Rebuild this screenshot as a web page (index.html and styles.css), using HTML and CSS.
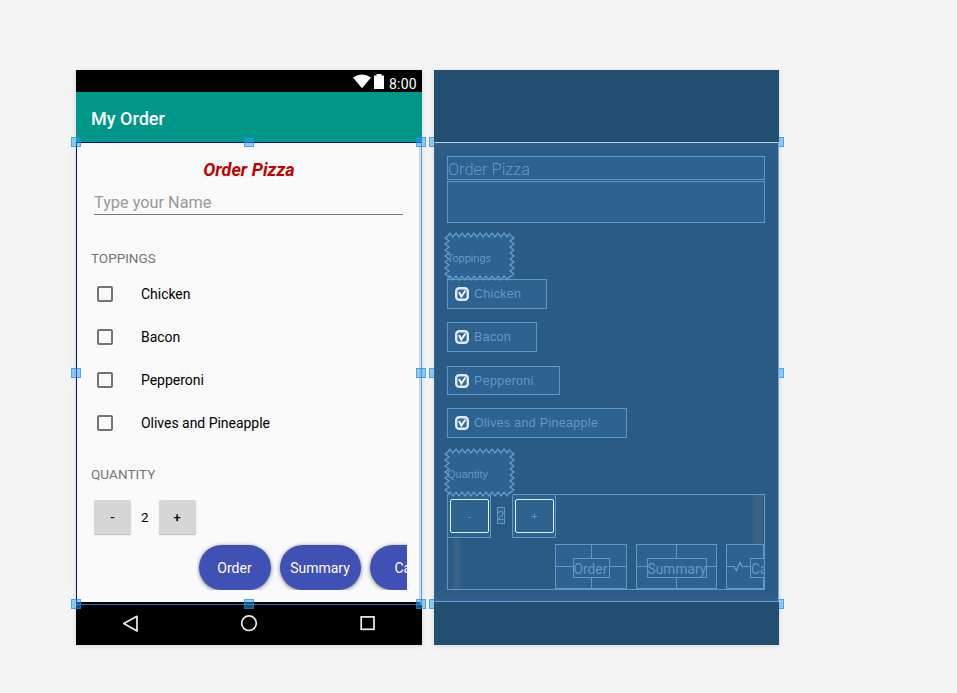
FILE: index.html
```html
<!DOCTYPE html>
<html lang="en">
<head>
<meta charset="utf-8">
<title>My Order</title>
<link rel="stylesheet" href="styles.css">
</head>
<body>
<main class="canvas">
  <section class="device preview">
    <header class="status">
      <svg class="wifi" width="18" height="15" viewBox="0 0 18 15"><path d="M0 3.6Q9-2.8 18 3.6L9 14.3Z" fill="#fff"/></svg>
      <svg class="battery" width="10" height="15" viewBox="0 0 10 15"><path d="M0 1.5h2.5V0h5v1.5H10V15H0Z" fill="#fff"/></svg>
      <span class="clock">8:00</span>
    </header>
    <div class="appbar"><span>My Order</span></div>
    <div class="screen">
      <h1 class="heading"><span>Order Pizza</span></h1>
      <div class="field"><span>Type your Name</span></div>
      <h2 class="section toppings"><span>TOPPINGS</span></h2>
      <div class="checks">
        <label class="check"><i class="box"></i><span>Chicken</span></label>
        <label class="check"><i class="box"></i><span>Bacon</span></label>
        <label class="check"><i class="box"></i><span>Pepperoni</span></label>
        <label class="check"><i class="box"></i><span>Olives and Pineapple</span></label>
      </div>
      <h2 class="section quantity"><span>QUANTITY</span></h2>
      <div class="stepper"><button class="step">-</button><span class="count">2</span><button class="step">+</button></div>
      <div class="actions">
        <button class="pill order">Order</button>
        <button class="pill summary">Summary</button>
        <button class="pill cancel">Ca</button>
      </div>
    </div>
    <nav class="nav">
      <svg width="346" height="43" viewBox="0 0 346 43" fill="none" stroke="#eee" stroke-width="1.7"><path d="M61 14.3V29L47.8 21.6Z" stroke-linejoin="round"/><circle cx="173" cy="21.2" r="7.3"/><rect x="285.2" y="14.9" width="12.8" height="12.4"/></svg>
    </nav>
    <div class="outline"></div>
    <i class="handle top left"></i><i class="handle top mid"></i><i class="handle top right"></i>
    <i class="handle middle left"></i><i class="handle middle right"></i>
    <i class="handle bottom left"></i><i class="handle bottom mid"></i><i class="handle bottom right"></i>
  </section>

  <section class="device blueprint">
    <div class="bp-top"></div>
    <div class="bp-screen">
      <div class="bp-title"><span>Order Pizza</span></div>
      <div class="bp-input"></div>
      <div class="bp-label"><svg class="zig" width="70" height="48"></svg><span>Toppings</span></div>
      <div class="bp-check chicken"><svg class="tick" width="14" height="14" viewBox="0 0 14 14"><use href="#tick"/></svg><span>Chicken</span></div>
      <div class="bp-check bacon"><svg class="tick" width="14" height="14" viewBox="0 0 14 14"><use href="#tick"/></svg><span>Bacon</span></div>
      <div class="bp-check pepperoni"><svg class="tick" width="14" height="14" viewBox="0 0 14 14"><use href="#tick"/></svg><span>Pepperoni</span></div>
      <div class="bp-check olives"><svg class="tick" width="14" height="14" viewBox="0 0 14 14"><use href="#tick"/></svg><span>Olives and Pineapple</span></div>
      <div class="bp-label"><svg class="zig" width="70" height="48"></svg><span>Quantity</span></div>
      <div class="bp-group">
        <div class="bp-stepper">
          <div class="bp-btn"><b>-</b></div><div class="bp-count"><span>2</span></div><div class="bp-btn"><b>+</b></div>
        </div>
        <div class="bp-actions">
          <div class="bp-pill bp-order"><span>Order</span></div>
          <div class="bp-pill bp-summary"><span>Summary</span></div>
          <div class="bp-pill bp-cancel">
            <svg class="spring" width="23" height="16" viewBox="0 0 23 16" fill="none" stroke="#6aa1d2" stroke-width="1.2"><path d="M0 7.5H7L9.5 11.5L13 3.5L15 7.5H23"/></svg>
            <span>Ca</span>
          </div>
        </div>
      </div>
    </div>
    <div class="bp-bottom"></div>
    <i class="handle half top left"></i><i class="handle half top right"></i>
    <i class="handle half middle left"></i><i class="handle half middle right"></i>
    <i class="handle half bottom left"></i><i class="handle half bottom right"></i>
  </section>
</main>
<svg class="defs" width="0" height="0"><defs><g id="tick"><rect x="1.2" y="1.2" width="11.6" height="11.6" rx="3" fill="#35699a" stroke="#dfeaff" stroke-width="2.4"/><path d="M4 5L6.3 9.5L10.5 3.5" fill="none" stroke="#f0f5ff" stroke-width="2"/></g></defs></svg>
<script src="zigzag.js"></script>
</body>
</html>
```
FILE: styles.css
```css
* { box-sizing: border-box; }
body { margin: 0; background: #f4f4f4; font-family: Roboto, sans-serif; overflow: hidden; }
h1, h2 { margin: 0; font-weight: 400; }
button { border: 0; padding: 0; font-family: inherit; }
.defs { position: absolute; }
.canvas { display: flex; gap: 12px; padding: 70px 0 48px 76px; height: 693px; }
.device { position: relative; height: 575px; box-shadow: 0 1px 5px rgba(0, 0, 0, .12); display: flex; flex-direction: column; }
.preview { width: 346px; }
.blueprint { width: 345px; }

.status { height: 22px; background: #000; color: #fff; display: flex; justify-content: flex-end; padding: 4px 5px 0 0; }
.battery { margin-left: 3px; }
.clock { font-size: 14px; line-height: 20px; margin-left: 5px; width: 28px; white-space: nowrap; letter-spacing: .2px; }
.appbar { height: 50px; background: #009788; color: #fff; padding-left: 15px; font-size: 18px; font-weight: 500; line-height: 53px; }
.screen { height: 460px; background: #fafafa; padding: 14px 15px 0; overflow: hidden; }
.heading { height: 28px; text-align: center; color: #c00000; font-size: 18px; line-height: 28px; font-weight: 700; font-style: italic; }
.field { height: 31px; margin: 0 4px 0 3px; border-bottom: 1px solid #777; color: #999; font-size: 16.3px; line-height: 37px; }
.section { font-size: 13.5px; color: #757575; line-height: 20px; height: 20px; }
.toppings { margin-top: 34px; line-height: 19px; }
.checks { margin-top: 3px; }
.check { display: flex; align-items: center; height: 43px; font-size: 14px; letter-spacing: -.03px; color: #000; }
.box { width: 16px; height: 16px; border: 2px solid #737373; border-radius: 2px; margin: 0 28px 0 6px; }
.quantity { margin-top: 20px; letter-spacing: .06px; }
.stepper { display: flex; align-items: center; margin: 16px 0 0 3px; height: 34px; font-size: 14px; }
.step { width: 37px; height: 34px; background: #d6d6d6; border-radius: 2px; box-shadow: 0 1px 1px #bbb; font-size: 13px; font-weight: 500; color: #000; }
.count { width: 27.5px; text-align: center; font-size: 13.5px; }
.actions { display: flex; gap: 9px; height: 49px; padding: 4px 0 0 1.5px; margin: 7px 0 0 106px; overflow: hidden; }
.pill { flex: none; height: 45px; border-radius: 23px; background: #3f51b5; color: #fff; font-size: 14px; line-height: 47px; box-shadow: 0 1px 4px rgba(0, 0, 0, .5); }
.order { width: 72px; }
.summary { width: 81px; }
.cancel { width: 75px; text-align: left; padding-left: 25px; }
.nav { height: 43px; background: #000; }
.nav svg { display: block; }

.outline { position: absolute; left: 0; top: 72px; width: 346px; height: 463px; border: 1px solid #0808a8; border-right-color: #5a9fdf; border-bottom-color: #1773b5; box-shadow: inset -3px 0 0 -1px rgba(170, 185, 210, .55); }
.handle { position: absolute; width: 10px; height: 10px; background: rgba(46, 160, 247, .5); border: 1px solid rgba(20, 133, 215, .55); }
.top { top: 67px; }
.middle { top: 298px; }
.bottom { top: 529px; }
.left { left: -5px; }
.mid { left: 168px; }
.right { right: -4px; }
.half { width: 5px; }
.half.left { border-right: 0; }
.half.right { right: -5px; border-left: 0; }

.blueprint { color: #6299c9; }
.bp-top { height: 72px; background: #224e70; }
.bp-screen { height: 460px; background: linear-gradient(#305f88, #2a5b84 18px, #2a5b84 445px, #305f88); border: 1px solid #a9c5e0; border-top-color: #b9d0e6; border-bottom-color: #6aa0d3; border-left-color: #3b6690; border-right-color: #6ea8de; padding: 13px 13px 0 12px; }
.bp-bottom { height: 43px; background: #224e70; }
.bp-title, .bp-input, .bp-check, .bp-btn, .bp-pill, .bp-count { background: #2e628f; border: 1px solid #5f99ca; }
.bp-title { height: 24px; font-size: 16.4px; font-weight: 300; line-height: 25px; }
.bp-input { height: 42px; margin-top: 1px; }
.bp-label { position: relative; width: 66px; height: 44px; margin-top: 12px; background: #2e628f; font: 11px/46px "Liberation Sans", sans-serif; }
.bp-label span { position: relative; }
.zig { position: absolute; left: -2px; top: -2px; overflow: visible; }
.bp-check { display: flex; align-items: center; height: 30px; padding-left: 7px; font: 12.5px "Liberation Sans", sans-serif; letter-spacing: .3px; white-space: nowrap; }
.tick { margin-right: 5px; }
.chicken { width: 100px; }
.bacon { width: 90px; margin-top: 13px; }
.pepperoni { width: 113px; margin-top: 14px; height: 29px; }
.olives { width: 180px; margin-top: 13px; }
.olives + .bp-label { margin-top: 13px; }
.bp-group { height: 96px; margin-top: -1px; border: 1px solid #5f99ca; background: linear-gradient(90deg, transparent 4px, #3a6388 7px, #3a6388 10px, transparent 15px) 0 44px / 16px 50px no-repeat, linear-gradient(90deg, transparent, #3a6388 7px, #3a6388 11px, transparent) 302px 0 / 14px 49px no-repeat; }
.bp-stepper { display: flex; height: 49px; margin: -1px 0 0 -1px; }
.bp-btn { width: 44px; height: 44px; padding: 4px 2px; }
.bp-btn + .bp-count + .bp-btn { margin-left: 0; }
.bp-btn b { display: block; width: 39px; height: 34px; border: 1.5px solid #e3f0ff; border-radius: 2px; text-align: center; font: 11px/33px "Liberation Sans", sans-serif; }
.bp-count { width: 8px; height: 17px; margin: 13px 7px 0 6px; font: 13px/16px "Liberation Sans", sans-serif; }
.bp-count span { margin-left: -1px; }
.bp-actions { display: flex; gap: 9px; margin: 1px 0 0 107px; overflow: hidden; }
.bp-pill { flex: none; height: 45px; display: flex; align-items: center; justify-content: center; font-size: 13.8px; background: linear-gradient(#5f99ca, #5f99ca) center / 1px 100% no-repeat, linear-gradient(#5f99ca, #5f99ca) center / 100% 1px no-repeat, #2e628f; }
.bp-pill span { border: 1px solid #5f99ca; background: #2e628f; height: 20px; line-height: 21px; margin-top: 2px; white-space: nowrap; }
.bp-order { width: 72px; }
.bp-order span { width: 37px; }
.bp-summary { width: 81px; }
.bp-summary span { width: 60px; }
.bp-cancel { width: 76px; justify-content: flex-start; background: linear-gradient(#5f99ca, #5f99ca) 36px 0 / 1px 100% no-repeat, #2e628f; }
.bp-cancel span { width: 30px; }
.spring { flex: none; }
```
FILE: zigzag.js
```js
// Serrated outline around the section labels.
document.querySelectorAll('.zig').forEach(function (svg) {
  var x, y, i, top = '', bottom = '', left = '', right = '';
  for (i = 0, x = 2; x <= 67; x += 3, i++) {
    top += (i ? 'L' : 'M') + x + ' ' + (i % 2 ? 0 : 4);
    bottom += (i ? 'L' : 'M') + x + ' ' + (i % 2 ? 43 : 47);
  }
  for (i = 0, y = 2; y <= 46; y += 3, i++) {
    left += (i ? 'L' : 'M') + (i % 2 ? 0 : 4) + ' ' + y;
    right += (i ? 'L' : 'M') + (i % 2 ? 69 : 65) + ' ' + y;
  }
  var path = document.createElementNS('http://www.w3.org/2000/svg', 'path');
  path.setAttribute('d', top + bottom + left + right);
  path.setAttribute('fill', 'none');
  path.setAttribute('stroke', '#639dcd');
  path.setAttribute('stroke-width', '1.3');
  svg.appendChild(path);
});
```
